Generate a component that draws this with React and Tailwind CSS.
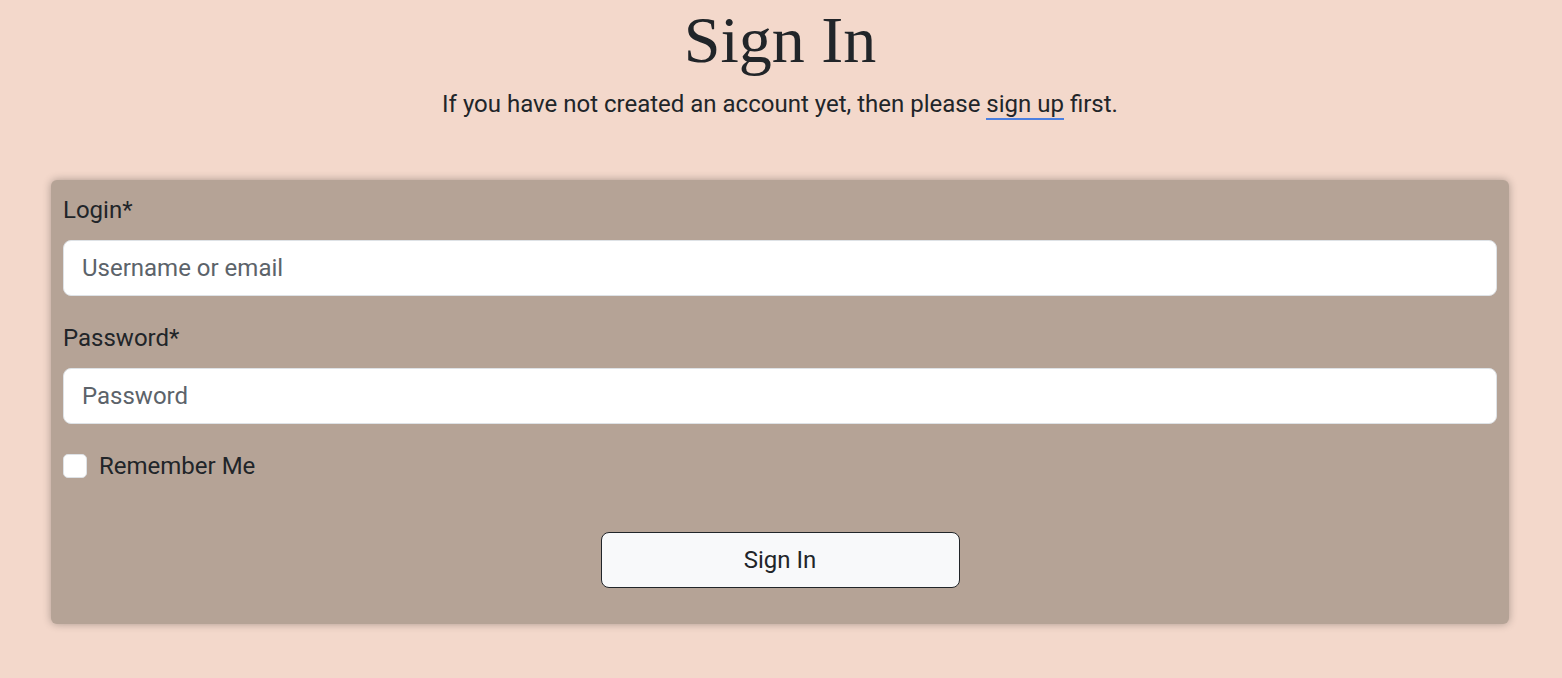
export default function App() {
  return (
    <div className="min-h-[678px] bg-[#f3d8cb] font-['Roboto',sans-serif] text-[#212529] pl-[51px] pr-[53px] pt-0 pb-[54px]">
      {/* Heading */}
      <h1 className="text-center font-['Liberation_Serif',serif] text-[66px] leading-[80px] text-[#212529]">
        Sign In
      </h1>
      <p className="mt-[6px] text-center text-[24px] leading-[36px]">
        If you have not created an account yet, then please{" "}
        <a href="#" className="border-b-2 border-[#4a7fe0]">
          sign up
        </a>{" "}
        first.
      </p>

      {/* Form card */}
      <form className="mt-[58px] rounded-md bg-[#b5a396] px-[12px] pt-[12px] pb-[36px] shadow-[0_0_8px_rgba(0,0,0,0.3)]">
        <label className="block text-[24px] leading-[36px] mb-[12px]">Login*</label>
        <input
          type="text"
          placeholder="Username or email"
          className="block w-full h-[56px] rounded-lg border border-[#dee2e6] bg-white px-[18px] text-[24px] outline-none placeholder:text-[#5c636a]"
        />

        <label className="block mt-[24px] text-[24px] leading-[36px] mb-[12px]">Password*</label>
        <input
          type="password"
          placeholder="Password"
          className="block w-full h-[56px] rounded-lg border border-[#dee2e6] bg-white px-[18px] text-[24px] outline-none placeholder:text-[#5c636a]"
        />

        <div className="mt-[24px] flex items-center gap-[12px] h-[36px]">
          <span className="h-[24px] w-[24px] rounded-[5px] border border-[#dee2e6] bg-white" />
          <span className="text-[24px] leading-[36px]">Remember Me</span>
        </div>

        <div className="mt-[48px] flex justify-center">
          <button
            type="button"
            className="h-[56px] w-[359px] rounded-lg border border-[#212529] bg-[#f8f9fa] text-[24px]"
          >
            Sign In
          </button>
        </div>
      </form>
    </div>
  );
}
